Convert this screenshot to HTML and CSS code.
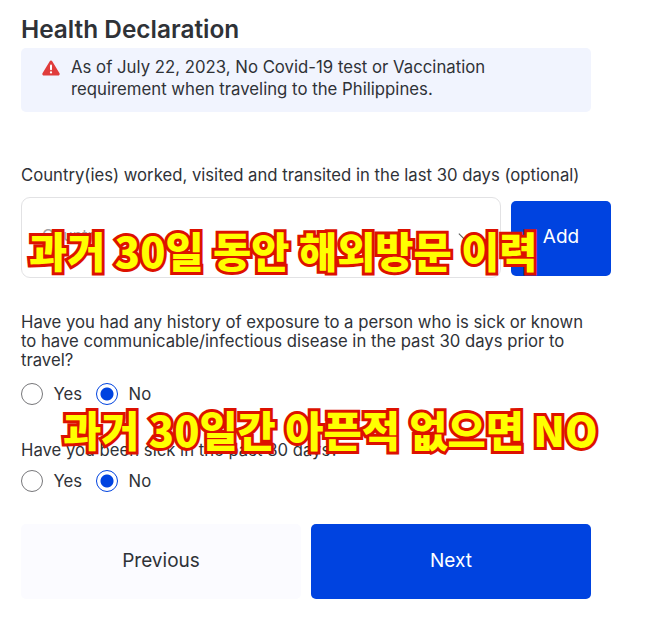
FILE: index.html
```html
<!DOCTYPE html>
<html lang="en">
<head>
    <meta charset="UTF-8">
    <meta name="viewport" content="width=device-width, initial-scale=1.0">
    <title>Health Declaration</title>
    <link rel="stylesheet" href="styles.css">
</head>
<body>

    <main class="page">
        <h1 class="title">Health Declaration</h1>

        <div class="notice">
            <svg class="notice-icon" viewBox="0 0 18 16" aria-hidden="true">
                <path d="M9 0.6c-.6 0-1.1.3-1.4.8L.5 13.2c-.6 1 .1 2.3 1.4 2.3h14.2c1.3 0 2-1.3 1.4-2.3L10.4 1.4C10.1.9 9.6.6 9 .6z" fill="#e03c3c"/>
                <rect x="8" y="4.6" width="2" height="5.6" rx="1" fill="#fff"/>
                <circle cx="9" cy="12.4" r="1.15" fill="#fff"/>
            </svg>
            <p class="notice-text">As of July 22, 2023, No Covid-19 test or Vaccination requirement when traveling to the Philippines.</p>
        </div>

        <label class="field-label">Country(ies) worked, visited and transited in the last 30 days (optional)</label>
        <div class="country-row">
            <div class="country-input">
                <span class="placeholder">Country</span>
                <span class="chevron"></span>
            </div>
            <button class="btn btn-primary btn-add">Add</button>
        </div>

        <p class="question">Have you had any history of exposure to a person who is sick or known to have communicable/infectious disease in the past 30 days prior to travel?</p>
        <div class="radio-group">
            <span class="radio"></span><span class="radio-label">Yes</span>
            <span class="radio checked"></span><span class="radio-label">No</span>
        </div>

        <p class="question question-second">Have you been sick in the past 30 days?</p>
        <div class="radio-group">
            <span class="radio"></span><span class="radio-label">Yes</span>
            <span class="radio checked"></span><span class="radio-label">No</span>
        </div>

        <div class="actions">
            <button class="btn btn-light">Previous</button>
            <button class="btn btn-primary">Next</button>
        </div>
    </main>

    <!-- Legendas por cima do formulário -->
    <div class="caption caption-one">과거 30일 동안 해외방문 이력</div>
    <div class="caption caption-two">과거 30일간 아픈적 없으면 NO</div>

</body>
</html>
```

FILE: styles.css
```css
body {
    margin: 0;
    background-color: #ffffff;
    color: #2f3237;
    font-family: "Inter", "Liberation Sans", sans-serif;
    position: relative;
    height: 625px;
    overflow: hidden;
}

.page {
    padding: 14px 0 0 21px;
    width: 590px;
}

.title {
    margin: 0;
    font-size: 24.4px;
    line-height: 30px;
    font-weight: 600;
}

.notice {
    margin-top: 4px;
    width: 570px;
    height: 64px;
    box-sizing: border-box;
    padding: 9px 20px;
    display: flex;
    gap: 12px;
    background-color: #f1f4fe;
    border-radius: 5px;
}

.notice-icon {
    width: 18px;
    height: 16px;
    margin-top: 3px;
    margin-left: 1px;
    margin-right: -1px;
    flex: none;
}

.notice-text {
    margin: 0;
    font-size: 16.75px;
    line-height: 21.6px;
}

.field-label {
    display: block;
    margin-top: 51px;
    font-size: 16.7px;
    line-height: 24px;
}

.country-row {
    display: flex;
    gap: 10px;
    margin-top: 10px;
    align-items: flex-start;
}

.country-input {
    width: 480px;
    height: 81px;
    box-sizing: border-box;
    border: 1px solid #e2e2e4;
    border-radius: 9px;
    padding: 0 20px;
    display: flex;
    align-items: center;
    justify-content: space-between;
}

.placeholder {
    color: #a0a0a4;
    font-size: 16px;
    margin-bottom: 5px;
}

.chevron {
    width: 11px;
    height: 11px;
    margin-right: 7.5px;
    margin-bottom: 7px;
    border-right: 1px solid #555;
    border-bottom: 1px solid #555;
    transform: rotate(45deg);
}

.btn {
    border: none;
    border-radius: 5px;
    font-family: inherit;
    font-size: 19px;
    padding: 0 0 2px;
    cursor: pointer;
}

.btn-primary {
    background-color: #0043e0;
    color: #ffffff;
}

.btn-light {
    background-color: #fbfbff;
    color: #2f3237;
}

.btn-add {
    width: 100px;
    height: 75px;
    margin-top: 4px;
    padding-bottom: 5px;
}

.question {
    margin: 35px 0 0;
    width: 570px;
    font-size: 16.7px;
    line-height: 19px;
}

.question-second {
    margin-top: 33px;
    line-height: 22px;
}

.radio-group {
    display: flex;
    align-items: center;
    margin-top: 8px;
    height: 24px;
}

.question + .radio-group {
    margin-top: 12px;
}

.question-second + .radio-group {
    margin-top: 8px;
}

.radio {
    width: 22px;
    height: 22px;
    border: 1.5px solid #77777a;
    border-radius: 50%;
    box-sizing: border-box;
    margin-right: 10.5px;
}

.radio.checked {
    border-color: #0043e0;
    background: radial-gradient(circle, #0043e0 0 6px, #ffffff 7px);
}

.radio-label {
    font-size: 16.7px;
    margin-right: 14px;
}

.actions {
    display: flex;
    gap: 10px;
    margin-top: 31px;
    width: 570px;
}

.actions .btn {
    flex: 1;
    height: 75px;
}

/* Legendas */
.caption {
    position: absolute;
    white-space: nowrap;
    font-family: "Noto Sans CJK KR", sans-serif;
    font-weight: 900;
    font-size: 41.5px;
    line-height: 50px;
    color: #ffff00;
    -webkit-text-stroke: 6px #dd1100;
    paint-order: stroke fill;
}

.caption-one {
    left: 29px;
    top: 225px;
}

.caption-two {
    left: 63px;
    top: 404px;
}
```
